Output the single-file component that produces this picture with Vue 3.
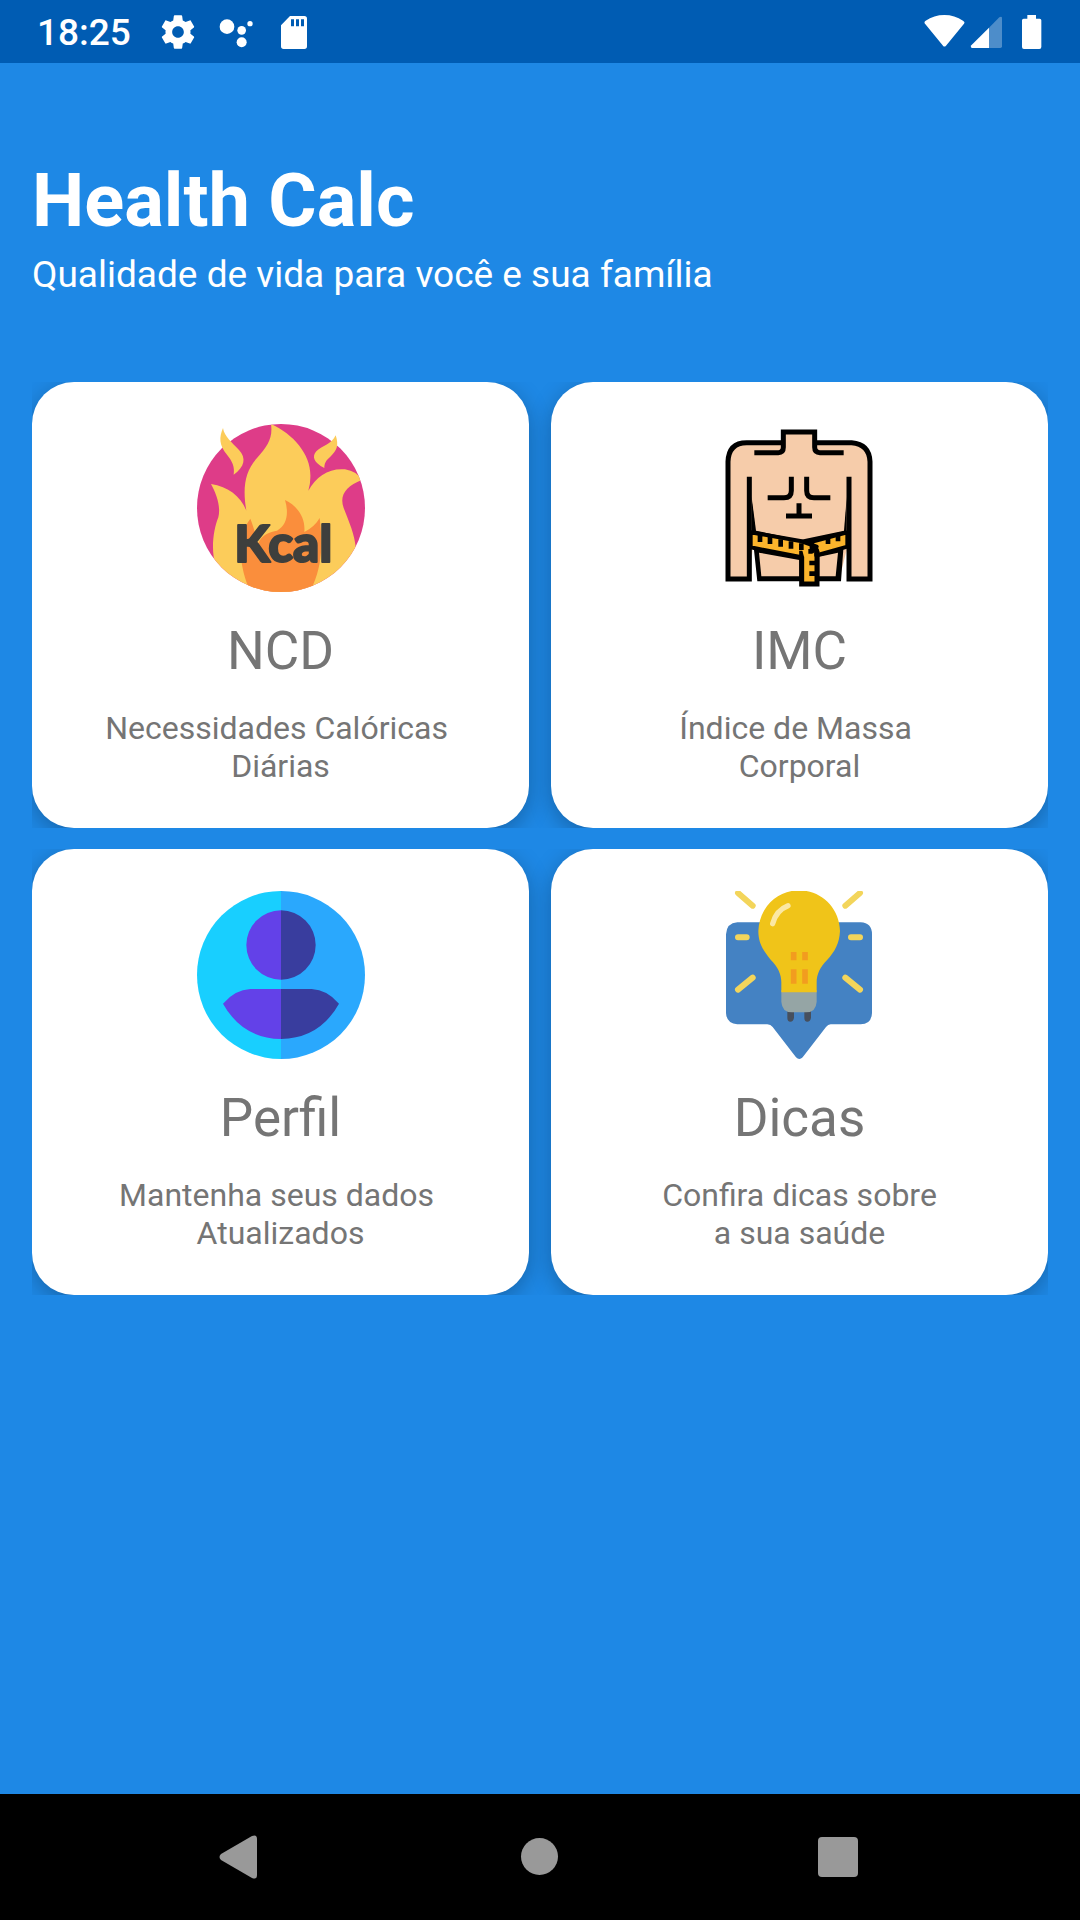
<script setup>
const rows = [
  [
    { id: 'ncd', title: 'NCD', text: 'Necessidades Calóricas \nDiárias' },
    { id: 'imc', title: 'IMC', text: 'Índice de Massa \nCorporal' },
  ],
  [
    { id: 'perfil', title: 'Perfil', text: 'Mantenha seus dados \nAtualizados' },
    { id: 'dicas', title: 'Dicas', text: 'Confira dicas sobre\na sua saúde' },
  ],
]
</script>

<template>
  <div class="screen">
    <header class="status">
      <time class="clock">18:25</time>
      <div class="notices">
        <svg viewBox="0 0 24 24" aria-hidden="true">
          <path d="M19.43 12.98c.04-.32.07-.64.07-.98s-.03-.66-.07-.98l2.11-1.65c.19-.15.24-.42.12-.64l-2-3.46c-.12-.22-.39-.3-.61-.22l-2.49 1c-.52-.4-1.08-.73-1.69-.98l-.38-2.65C14.46 2.18 14.25 2 14 2h-4c-.25 0-.46.18-.49.42l-.38 2.65c-.61.25-1.17.59-1.69.98l-2.49-1c-.23-.09-.49 0-.61.22l-2 3.46c-.13.22-.07.49.12.64l2.11 1.65c-.04.32-.07.65-.07.98s.03.66.07.98l-2.11 1.65c-.19.15-.24.42-.12.64l2 3.46c.12.22.39.3.61.22l2.49-1c.52.4 1.08.73 1.69.98l.38 2.65c.03.24.24.42.49.42h4c.25 0 .46-.18.49-.42l.38-2.65c.61-.25 1.17-.59 1.69-.98l2.49 1c.23.09.49 0 .61-.22l2-3.46c.12-.22.07-.49-.12-.64l-2.11-1.65zM12 15.5c-1.93 0-3.5-1.57-3.5-3.5s1.57-3.5 3.5-3.5 3.5 1.57 3.5 3.5-1.57 3.5-3.5 3.5z" />
        </svg>
        <svg viewBox="648 33 120 120" aria-hidden="true">
          <circle cx="681" cy="77" r="22" />
          <circle cx="725" cy="88" r="13" />
          <circle cx="725" cy="124" r="15" />
          <circle cx="750" cy="68" r="8" />
        </svg>
        <svg viewBox="822 33 120 120" aria-hidden="true">
          <path fill-rule="evenodd" d="M870 45H913Q921 45 921 53V136Q921 144 913 144H851Q843 144 843 136V73ZM873 55V76H882V55ZM888 55V76H897V55ZM903 55V76H912V55Z" />
        </svg>
      </div>
      <div class="system">
        <svg viewBox="72 33 126 120" aria-hidden="true">
          <path d="M75 68Q71 63 77 59Q102 42 133 42T189 59Q196 63 192 68L138 134Q133 139 129 134Z" />
        </svg>
        <svg viewBox="198 33 126 120" aria-hidden="true">
          <path d="M267 80V141H216Q210 139 214 133Z" />
          <path opacity=".3" d="M267 80L298 49Q306 45 306 52V136Q306 141 301 141H267Z" />
        </svg>
        <svg viewBox="324 33 126 120" aria-hidden="true">
          <path d="M382 42H408V53H419Q424 53 424 58V138Q424 144 418 144H372Q366 144 366 138V58Q366 53 371 53H382Z" />
        </svg>
      </div>
    </header>

    <main class="content">
      <h1 class="title">Health Calc</h1>
      <p class="subtitle">Qualidade de vida para você e sua família</p>

      <div class="menu">
        <div v-for="(row, i) in rows" :key="i" class="row">
          <button v-for="card in row" :key="card.id" type="button" class="card">
            <svg v-if="card.id === 'ncd'" class="art" viewBox="48 42 504 504" aria-hidden="true">
              <defs>
                <clipPath id="disc"><circle cx="300" cy="294" r="252" /></clipPath>
              </defs>
              <circle cx="300" cy="294" r="252" fill="#de3c88" />
              <g fill="#fccc5a">
                <g clip-path="url(#disc)">
                  <path d="M196 302C184 232 192 184 228 144C260 108 276 84 270 42C340 74 392 136 388 204Q388 222 382 242C406 198 444 174 492 178Q528 184 542 210C496 228 474 256 488 294C506 340 520 372 524 410L500 546H120L98 440C92 398 100 352 112 322C120 288 106 252 90 222C142 230 180 260 196 302Z" />
                </g>
                <path d="M126 54C130 80 154 98 174 120C196 144 192 170 158 194C162 170 154 154 138 134C114 106 114 82 126 54Z" />
                <path d="M464 76C474 106 468 122 448 140C434 152 430 160 430 174C398 158 392 140 406 124C424 106 452 104 464 76Z" />
              </g>
              <path clip-path="url(#disc)" fill="#fa8e3c" d="M200 546V526C176 462 166 382 208 326C216 346 222 368 232 400C240 374 268 366 288 362C318 346 324 310 312 270C350 288 374 324 370 366C390 356 406 342 416 324C424 392 426 456 396 526V546Z" />
              <text x="307" y="456" text-anchor="middle" class="kcal">Kcal</text>
            </svg>

            <svg v-else-if="card.id === 'imc'" class="art" viewBox="48 42 504 504" aria-hidden="true">
              <g stroke="#000" stroke-width="15" stroke-linejoin="round">
                <path fill="#f6ccaa" stroke="none" d="M84 507V155Q88 98 140 98H250V66H344V98H455Q506 100 510 155V507H447L440 420L418 507H178L160 400L148 507Z" />
                <path stroke="none" d="M155 260L168 362L300 390L432 362L440 260V410L430 418L423 514H172L162 420L155 412Z" />
                <path fill="#f6ccaa" stroke="none" d="M155 255L170 361L302 387L430 361L440 255V190H155ZM177 428L298 450V499H184ZM358 440L414 428L407 499H358Z" />
                <path fill="none" stroke-linejoin="miter" d="M148 200V507H84V155Q86 98 140 98H250M344 98H455Q508 102 510 155V507H447V200" />
                <path fill="none" stroke-linejoin="miter" d="M163 128H235Q250 128 250 112V66H344V112Q344 128 360 128H431" />
                <path fill="none" d="M274 200V242Q274 263 252 263H203M320 200V242Q320 263 342 263H391M297 280V312M258 318H336" />
                <path fill="#fbb42c" stroke-width="12" d="M152 367L305 394L350 410L305 442L152 412ZM332 396L442 367V410L348 436Z" />
                <path fill="#fbb42c" stroke-linejoin="miter" d="M305 430H351V522H305Z" />
                <path stroke="none" fill="#fbb42c" d="M305 414H343V440H312Z" />
                <path fill="none" stroke-width="14" d="M180 374V396M210 380V402M242 388V410M273 394V416M304 400V420M384 380V402M414 373V394M325 424H336V404L350 420V440M328 459H350M328 491H350" />
              </g>
            </svg>

            <svg v-else-if="card.id === 'perfil'" class="art" viewBox="48 48 504 504" aria-hidden="true">
              <path fill="#18cfff" d="M300 48A252 252 0 0 0 300 552Z" />
              <path fill="#2aa8fd" d="M300 48A252 252 0 0 1 300 552Z" />
              <path fill="#6341e8" d="M300 106A104 104 0 0 0 300 314ZM300 342H208Q162 344 126 386Q184 490 300 492Z" />
              <path fill="#393d9e" d="M300 106A104 104 0 0 1 300 314ZM300 342H392Q438 344 474 386Q416 490 300 492Z" />
            </svg>

            <svg v-else class="art" viewBox="48 48 504 504" aria-hidden="true">
              <path fill="#4482c3" d="M112 142H482Q516 144 516 178V414Q514 448 482 448H392Q384 448 378 456L308 547Q298 557 288 547L218 456Q212 448 202 448H112Q80 446 78 414V178Q80 144 112 142Z" />
              <g fill="none" stroke="#f3d55b" stroke-width="18" stroke-linecap="round">
                <path d="M114 54L158 92M480 54L436 92M114 187H140M453 187H480M114 344L158 308M480 344L436 308" />
              </g>
              <path fill="#464f5d" d="M262 408H282V428Q280 440 271 440T262 428ZM313 408H333V428Q331 440 322 440T313 428Z" />
              <path fill="#95a5a5" d="M244 346H350V380Q348 412 318 412H276Q246 412 244 380Z" />
              <path fill="#f0c419" d="M244 352V322C244 298 234 276 212 254C190 228 175 204 175 168C178 96 232 46 297 46S418 96 420 168C418 206 404 230 382 254C360 276 350 298 350 322V352Z" />
              <path fill="none" stroke="#fbe8a4" stroke-width="16" stroke-linecap="round" d="M218 146Q228 106 264 92" />
              <path fill="none" stroke="#f29c1f" stroke-width="17" d="M281 231V256M315 231V256M281 283V326M315 283V326" />
            </svg>

            <span class="card-title">{{ card.title }}</span>
            <span class="card-text">{{ card.text }}</span>
          </button>
        </div>
      </div>
    </main>

    <nav class="navbar">
      <button type="button" aria-label="Voltar">
        <svg viewBox="0 0 48 48"><path d="M5 21L36 3Q41 1 41 6V42Q41 47 36 45L5 27Q2 24 5 21Z" /></svg>
      </button>
      <button type="button" aria-label="Início">
        <svg viewBox="0 0 48 48"><circle cx="23.5" cy="23.5" r="18.5" /></svg>
      </button>
      <button type="button" aria-label="Recentes">
        <svg viewBox="0 0 48 48"><rect x="2" y="4" width="40" height="40" rx="4" /></svg>
      </button>
    </nav>
  </div>
</template>

<style>
body {
  margin: 0;
  background: #1e88e5;
}
</style>

<style scoped>
.screen {
  display: flex;
  flex-direction: column;
  min-height: 100vh;
  background: #1e88e5;
  color: #fff;
  font-family: Roboto, "Liberation Sans", sans-serif;
}

.status {
  display: flex;
  align-items: center;
  height: 63px;
  padding: 0 30px 0 37px;
  background: #005cb3;
}

.status svg {
  display: block;
  height: 40px;
  fill: #fff;
}

.clock {
  padding-top: 2px;
  font-size: 37px;
  font-weight: 500;
  line-height: 44px;
}

.notices {
  display: flex;
  gap: 18px;
  margin-left: 27px;
}

.notices svg {
  width: 40px;
}

.system {
  display: flex;
  margin-left: auto;
}

.system svg {
  width: 42px;
}

.content {
  flex: 1;
  padding: 95px 32px 32px;
}

.title {
  margin: 0;
  font-size: 74px;
  font-weight: 700;
  line-height: 86px;
}

.subtitle {
  margin: 9px 0 0;
  font-size: 37px;
  line-height: 44px;
}

.menu {
  display: flex;
  flex-direction: column;
  gap: 21px;
  margin-top: 85px;
}

.row {
  display: flex;
  gap: 22px;
  overflow: hidden;
}

.card {
  display: flex;
  flex: 1 1 0;
  flex-direction: column;
  align-items: center;
  min-width: 0;
  padding: 42px 16px 43px;
  border: 0;
  border-radius: 42px;
  background: #fff;
  box-shadow: 0 6px 22px rgba(0, 0, 0, 0.26);
  color: #757575;
  font-family: inherit;
  cursor: pointer;
}

.art {
  display: block;
  width: 168px;
  height: 168px;
}

.kcal {
  fill: #3e3f3d;
  stroke: #3e3f3d;
  stroke-width: 6px;
  stroke-linejoin: round;
  font-family: Lato, sans-serif;
  font-size: 154px;
  font-weight: 900;
}

.card-title {
  margin-top: 28px;
  font-size: 53px;
  line-height: 62px;
}

.card-text {
  margin-top: 27px;
  font-size: 32px;
  line-height: 38px;
  text-align: center;
  white-space: pre;
}

.navbar {
  display: grid;
  grid-template-columns: repeat(3, 1fr);
  height: 126px;
  padding: 0 90px;
  background: #000;
}

.navbar button {
  display: flex;
  align-items: center;
  justify-content: center;
  padding: 0;
  border: 0;
  background: none;
}

.navbar svg {
  width: 48px;
  height: 48px;
  fill: #999;
}
</style>
